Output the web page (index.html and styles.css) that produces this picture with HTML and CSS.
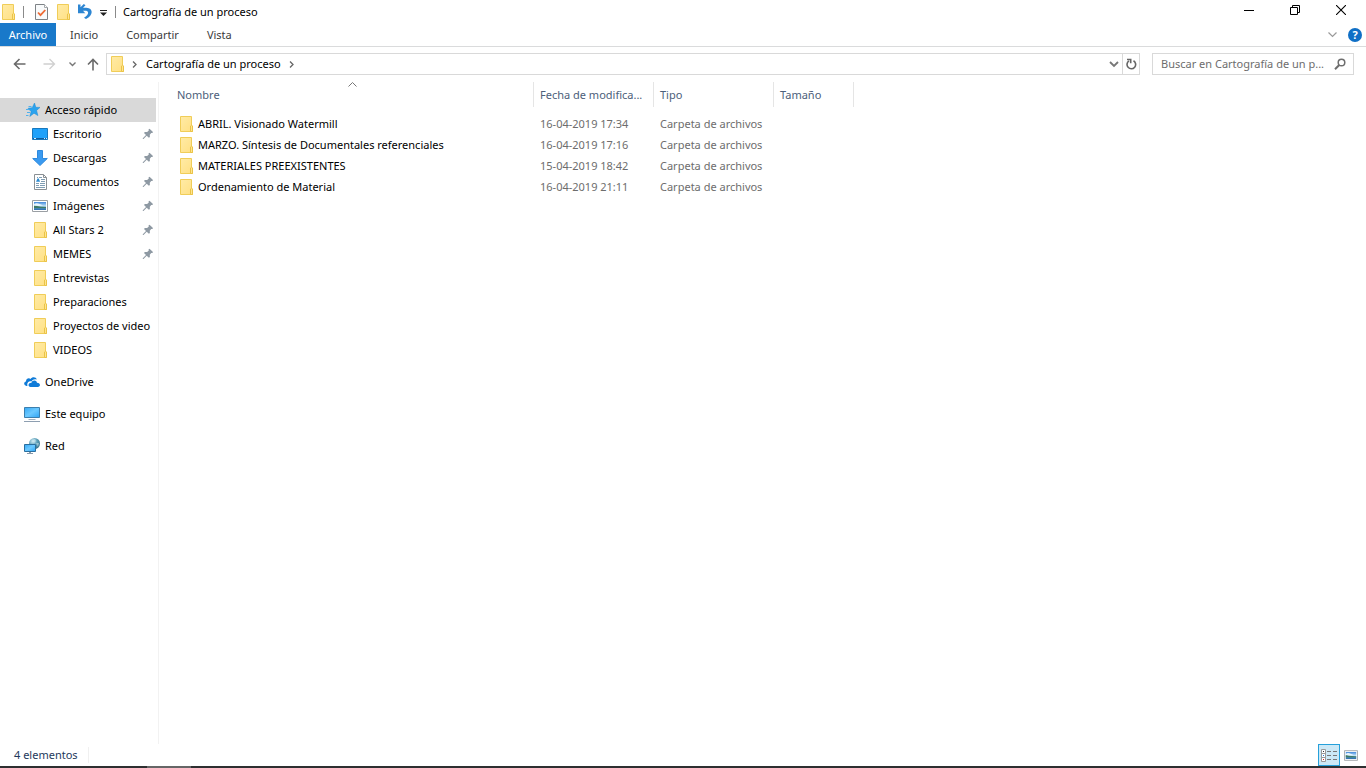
FILE: index.html
```html
<!DOCTYPE html>
<html lang="es">
<head>
<meta charset="utf-8">
<title>Cartografía de un proceso</title>
<link rel="stylesheet" href="styles.css">
</head>
<body>
<svg class="defs" aria-hidden="true">
  <defs>
    <linearGradient id="fold" x1="0" y1="0" x2="1" y2="1"><stop offset="0" stop-color="#ffeba6"/><stop offset="1" stop-color="#ffe083"/></linearGradient>
    <linearGradient id="screen" x1="0" y1="0" x2="1" y2="1"><stop offset="0" stop-color="#35a8f5"/><stop offset=".5" stop-color="#6cc9ff"/><stop offset="1" stop-color="#2ea4f4"/></linearGradient>
    <linearGradient id="sky" x1="0" y1="0" x2="0" y2="1"><stop offset="0" stop-color="#4088dc"/><stop offset=".5" stop-color="#c3e2f7"/><stop offset=".7" stop-color="#4f93b0"/><stop offset="1" stop-color="#2e6cb4"/></linearGradient>
    <radialGradient id="globe" cx=".35" cy=".3" r=".8"><stop offset="0" stop-color="#cfe9f2"/><stop offset=".5" stop-color="#5c9fb8"/><stop offset="1" stop-color="#2f6a85"/></radialGradient>
  </defs>
  <symbol id="folder" viewBox="0 0 13 16"><path d="M.5.5h11v9l1 .5v5.500H.5z" fill="url(#fold)" stroke="#f0cd58"/><path d="M10.500 15.500V10l1-.8 1 .8v5.500z" fill="#ffe58f" stroke="#eac348"/></symbol>
  <symbol id="pin" viewBox="0 0 12 12"><path d="M6.500 1.500l1-.8L11 4l-.6 1H9.200L7.800 6.800l.1 2.100-1 .9L4.700 7.800 1.500 11H.8v-.7L4 7 2 4.900l.9-.9 2.200.1 1.700-1.600z" fill="#8e99a3"/></symbol>
  <symbol id="picture" viewBox="0 0 16 12"><path d="M.5.500h15v11H.5z" fill="#fff" stroke="#9a9fa4"/><path d="M2 2h12v8H2z" fill="url(#sky)"/><path d="M2 5.500l3 .5 4 .7 5 .3v1H2z" fill="#3f7a66"/><path d="M2 4.500q2-2 4-1l3 1 2 1q-4 .8-9 0" fill="#eaf6fd"/></symbol>
</svg>

<div class="window">
  <header class="titlebar">
    <svg class="folder" aria-hidden="true"><use href="#folder"/></svg>
    <span class="rule rule-first"></span>
    <button class="quick quick-props" aria-label="Propiedades"><svg width="13" height="16" viewBox="0 0 13 16"><path d="M.5.500h9l3 3v12H.5z" fill="#f8fafb" stroke="#7d8286"/><path d="M9.500.500v3h3" fill="#fff" stroke="#a5a9ac"/><path d="M3 8.500l2.500 2.700L10.300 6" fill="none" stroke="#ee6b35" stroke-width="1.800"/></svg></button>
    <button class="quick quick-new" aria-label="Nueva carpeta"><svg class="folder"><use href="#folder"/></svg></button>
    <button class="quick quick-undo" aria-label="Deshacer"><svg width="14" height="15" viewBox="0 0 14 15"><path d="M0 .5h2.500v2.700L5.800 0l1.700 1.200L5 3.700h3.500C15.500 4.200 15.500 11 8 15l-2-1.200c4.500-3 5.500-6.500 2-7H5L7.300 9.300H0z" fill="#2d86d2"/></svg></button>
    <button class="quick quick-more" aria-label="Personalizar"><svg width="7" height="6" viewBox="0 0 7 6"><path d="M0 0h7v1H0zM0 2.500h7L3.500 6z" fill="#222"/></svg></button>
    <span class="rule"></span>
    <h1 class="title">Cartografía de un proceso</h1>
    <div class="caption">
      <button aria-label="Minimizar"><svg width="10" height="10" viewBox="0 0 10 10"><path d="M0 5.500h10" stroke="#000"/></svg></button>
      <button aria-label="Restaurar"><svg width="10" height="10" viewBox="0 0 10 10"><path d="M.5 2.500h7v7h-7zM2.500 2.500v-2h7v7h-2" fill="none" stroke="#000"/></svg></button>
      <button aria-label="Cerrar"><svg width="10" height="10" viewBox="0 0 10 10"><path d="M0 0l10 10M10 0L0 10" stroke="#000" stroke-width="1.100"/></svg></button>
    </div>
  </header>

  <nav class="ribbon" aria-label="Cinta">
    <button class="tab tab-file">Archivo</button>
    <button class="tab">Inicio</button>
    <button class="tab">Compartir</button>
    <button class="tab">Vista</button>
    <span class="fill"></span>
    <button class="expand" aria-label="Expandir la cinta"><svg width="9" height="6" viewBox="0 0 9 6"><path d="M.5.500l4 4 4-4" fill="none" stroke="#9a9a9a" stroke-width="1.200"/></svg></button>
    <button class="help" aria-label="Ayuda">?</button>
  </nav>

  <div class="navbar">
    <button class="nav-btn nav-back" aria-label="Atrás"><svg width="13" height="12" viewBox="0 0 13 12"><path d="M12.500 6H1.500M6.500 1l-5 5 5 5" fill="none" stroke="#6a6a6a" stroke-width="1.600"/></svg></button>
    <button class="nav-btn nav-forward" aria-label="Adelante"><svg width="13" height="12" viewBox="0 0 13 12"><path d="M.5 6h11M6.500 1l5 5-5 5" fill="none" stroke="#d0d0d0" stroke-width="1.300"/></svg></button>
    <button class="nav-btn nav-recent" aria-label="Recientes"><svg width="7" height="5" viewBox="0 0 7 5"><path d="M.5.500l3 3 3-3" fill="none" stroke="#777" stroke-width="1.400"/></svg></button>
    <button class="nav-btn nav-up" aria-label="Subir"><svg width="12" height="13" viewBox="0 0 12 13"><path d="M6 12.500V1.500M1 6.500l5-5 5 5" fill="none" stroke="#6a6a6a" stroke-width="1.600"/></svg></button>
    <div class="address">
      <svg class="folder" aria-hidden="true"><use href="#folder"/></svg>
      <svg class="crumb" viewBox="0 0 5 7" aria-hidden="true"><path d="M1 .5l3 3-3 3" fill="none" stroke="#666" stroke-width="1.300"/></svg>
      <a href="#">Cartografía de un proceso</a>
      <svg class="crumb" viewBox="0 0 5 7" aria-hidden="true"><path d="M1 .5l3 3-3 3" fill="none" stroke="#666" stroke-width="1.300"/></svg>
      <span class="fill"></span>
      <button class="history" aria-label="Ubicaciones anteriores"><svg width="10" height="7" viewBox="0 0 10 7"><path d="M1 1l4 4 4-4" fill="none" stroke="#777" stroke-width="1.800"/></svg></button>
      <button class="refresh" aria-label="Actualizar"><svg width="11" height="12" viewBox="0 0 11 12"><path d="M7.500 2.700a4.300 4.300 0 1 1-4.500.1" fill="none" stroke="#666" stroke-width="1.600"/><path d="M1 1.500h3.700v3.800" fill="none" stroke="#666" stroke-width="1.600"/></svg></button>
    </div>
    <div class="search">
      <input type="text" aria-label="Buscar" placeholder="Buscar en Cartografía de un p...">
      <svg width="12" height="12" viewBox="0 0 12 12" aria-hidden="true"><circle cx="7.500" cy="4.500" r="3.300" fill="none" stroke="#6e6e6e" stroke-width="1.500"/><path d="M5.200 7L1 11.200" stroke="#6e6e6e" stroke-width="2"/></svg>
    </div>
  </div>

  <div class="body">
    <nav class="side" aria-label="Panel de navegación">
      <a href="#" class="item root selected"><span class="icon icon-star"><svg width="14" height="14" viewBox="0 0 14 14"><path d="M8.500 0l1.300 4.300 4.200.1-3.400 3 1.300 5.200-3.900-2.400-4.200 3.300 1.300-4.900L2 5.300l4.200-.6z" fill="#2ba3ee" stroke="#1c8ad4" stroke-width=".5"/><path d="M2.500 3.500h3M0 6.500h3M1 9.500h3M0 12.500h2.500" stroke="#4fb0ec"/></svg></span>Acceso rápido</a>
      <a href="#" class="item"><span class="icon"><svg width="16" height="12" viewBox="0 0 16 12"><path d="M.5.500h15v11H.5z" fill="#1ea1fa" stroke="#1878bd"/><path d="M1 10.500h14" stroke="#0d5b9c"/><path d="M2 10.500h2M12 10.500h1M14 10.500h1" stroke="#d7efff"/></svg></span><span class="label">Escritorio</span><svg class="pin"><use href="#pin"/></svg></a>
      <a href="#" class="item"><span class="icon"><svg width="16" height="16" viewBox="0 0 16 16"><path d="M5.500.500h5v8h4.800L8 15.500.700 8.500h4.800z" fill="#3a9af0" stroke="#2e8ade"/></svg></span><span class="label">Descargas</span><svg class="pin"><use href="#pin"/></svg></a>
      <a href="#" class="item"><span class="icon"><svg width="13" height="16" viewBox="0 0 13 16"><path d="M.5.500h9l3 3v12H.5z" fill="#fff" stroke="#8a9094"/><path d="M9.500.500v3h3" fill="none" stroke="#8a9094"/><path d="M3 3.500h1M5 3.500h3M7 5.500h4M7 7.500h4M2 9.500h3M6 9.500h5M2 11.500h3M6 11.500h5M2 13.500h9" stroke="#7f9db3"/><path d="M2 7.800L3.500 4.500h1.300L6 7.800z" fill="#2b8ad0"/></svg></span><span class="label">Documentos</span><svg class="pin"><use href="#pin"/></svg></a>
      <a href="#" class="item"><span class="icon"><svg width="16" height="12"><use href="#picture"/></svg></span><span class="label">Imágenes</span><svg class="pin"><use href="#pin"/></svg></a>
      <a href="#" class="item"><span class="icon"><svg class="folder"><use href="#folder"/></svg></span><span class="label">All Stars 2</span><svg class="pin"><use href="#pin"/></svg></a>
      <a href="#" class="item"><span class="icon"><svg class="folder"><use href="#folder"/></svg></span><span class="label">MEMES</span><svg class="pin"><use href="#pin"/></svg></a>
      <a href="#" class="item"><span class="icon"><svg class="folder"><use href="#folder"/></svg></span>Entrevistas</a>
      <a href="#" class="item"><span class="icon"><svg class="folder"><use href="#folder"/></svg></span>Preparaciones</a>
      <a href="#" class="item"><span class="icon"><svg class="folder"><use href="#folder"/></svg></span>Proyectos de video</a>
      <a href="#" class="item"><span class="icon"><svg class="folder"><use href="#folder"/></svg></span>VIDEOS</a>
      <a href="#" class="item root apart"><span class="icon"><svg width="16" height="10" viewBox="0 0 16 10"><path d="M3.500 9H2.500C-.5 8.500-.5 5 2 4.500 2 1.500 5 .5 6.500 2 8-.5 12-.5 12.800 2.500 10 1.500 8 3 7.500 4.500 4.500 3.500 2.500 6.500 3.500 9z" fill="#0f7bd8"/><path d="M6.500 10C3.500 9.800 4 5.500 7.500 5.800 8 2.800 12.500 2.500 13 5.700c3.800 0 3.800 4.200.8 4.300z" fill="#0f7bd8"/></svg></span>OneDrive</a>
      <a href="#" class="item root apart"><span class="icon"><svg width="16" height="15" viewBox="0 0 16 15"><path d="M.5.500h15v10H.5z" fill="url(#screen)" stroke="#3b7fae"/><path d="M4.500 12.500h7" stroke="#a2b0bd"/><path d="M0 14.500h16" stroke="#8e9fb1"/></svg></span>Este equipo</a>
      <a href="#" class="item root apart"><span class="icon"><svg width="16" height="16" viewBox="0 0 16 16"><circle cx="10.500" cy="5.500" r="5.500" fill="url(#globe)"/><path d="M8 2l3-1 1 2-2 2zM12 5l3 0-1 4z" fill="#d6eef5" opacity=".5"/><path d="M.5 6.500h11v7H.5z" fill="url(#screen)" stroke="#2b6e9e"/><path d="M5 14.500h2M3 15.500h6" stroke="#8799aa"/></svg></span>Red</a>
    </nav>

    <main class="content">
      <table class="files">
        <colgroup><col class="c-name"><col class="c-date"><col class="c-type"><col class="c-size"></colgroup>
        <thead><tr>
          <th scope="col" class="sorted">Nombre<svg class="sort" viewBox="0 0 9 5" aria-hidden="true"><path d="M.5 4.500l4-4 4 4" fill="none" stroke="#777"/></svg></th>
          <th scope="col">Fecha de modifica...</th><th scope="col">Tipo</th><th scope="col">Tamaño</th>
        </tr></thead>
        <tbody>
          <tr><td><span class="name"><svg class="folder"><use href="#folder"/></svg>ABRIL. Visionado Watermill</span></td><td>16-04-2019 17:34</td><td>Carpeta de archivos</td><td></td></tr>
          <tr><td><span class="name"><svg class="folder"><use href="#folder"/></svg>MARZO. Síntesis de Documentales referenciales</span></td><td>16-04-2019 17:16</td><td>Carpeta de archivos</td><td></td></tr>
          <tr><td><span class="name"><svg class="folder"><use href="#folder"/></svg>MATERIALES PREEXISTENTES</span></td><td>15-04-2019 18:42</td><td>Carpeta de archivos</td><td></td></tr>
          <tr><td><span class="name"><svg class="folder"><use href="#folder"/></svg>Ordenamiento de Material</span></td><td>16-04-2019 21:11</td><td>Carpeta de archivos</td><td></td></tr>
        </tbody>
      </table>
    </main>
  </div>

  <footer class="status">
    <span class="count">4 elementos</span>
    <span class="fill"></span>
    <button class="view view-on" aria-label="Detalles"><svg width="16" height="13" viewBox="0 0 16 13"><path d="M.5.500h4v4h-4zM.5 4.500h4v4h-4zM.5 8.500h4v4h-4z" fill="#fff" stroke="#999"/><path d="M6 2.500h4M12 2.500h4M6 6.500h4M12 6.500h4M6 10.500h4M12 10.500h4" stroke="#777"/><path d="M2 2h1v1H2z" fill="#333"/><path d="M2 6h1v1H2z" fill="#1e78d8"/><path d="M2 10h1v1H2z" fill="#d22"/></svg></button>
    <button class="view" aria-label="Iconos grandes"><svg width="14" height="11"><use href="#picture"/></svg></button>
  </footer>
  <div class="taskbar"><span></span></div>
</div>
</body>
</html>
```
FILE: styles.css
```css
* { box-sizing: border-box; }
body {
  margin: 0;
  background: #fff;
  color: #000;
  font: 11px/16px "Noto Sans", "Open Sans", sans-serif;
}
button {
  display: flex;
  align-items: center;
  justify-content: center;
  flex: none;
  margin: 0;
  padding: 0;
  border: 0;
  background: none;
  color: inherit;
  font: inherit;
}
a { color: inherit; text-decoration: none; }
svg { display: block; flex: none; }
.defs { position: absolute; width: 0; height: 0; }
.folder { width: 13px; height: 16px; }
.fill { flex: 1; }
.window { display: flex; flex-direction: column; height: 100vh; }

.titlebar { display: flex; align-items: center; height: 23px; padding-left: 2px; }
.rule { width: 1px; height: 12px; background: #8a8a8a; }
.rule-first { margin-left: 8px; }
.quick-props { margin-left: 11px; }
.quick-new { margin-left: 9px; }
.quick-undo { margin-left: 8px; }
.quick-more { margin: 2px 8px 0; }
.title { flex: 1; margin: 0 0 0 7px; font-size: 11px; font-weight: 400; }
.caption { display: flex; align-self: flex-start; padding-right: 2px; }
.caption button { width: 46px; height: 20px; }

.ribbon { display: flex; align-items: center; height: 24px; padding-right: 4px; border-bottom: 1px solid #dadbdc; }
.tab { height: 23px; padding: 0 14px; color: #3b3b3b; }
.tab-file { width: 56px; padding: 0; background: #1979ca; color: #fff; }
.expand { margin-right: 11px; }
.help { width: 14px; height: 14px; border-radius: 50%; background: #0f6fc6; color: #fff; font-weight: 700; }

.navbar { display: flex; align-items: center; padding: 6px 12px 0 0; }
.nav-back { margin-left: 13px; }
.nav-forward { margin-left: 17px; }
.nav-recent { margin-left: 13px; }
.nav-up { margin-left: 11px; }
.address { display: flex; flex: 1; align-items: center; height: 22px; margin-left: 7px; padding-left: 4px; border: 1px solid #d9d9d9; }
.crumb { width: 5px; height: 7px; margin: 0 9px 0 8px; }
.history { width: 16px; height: 20px; }
.refresh { width: 17px; height: 20px; border-left: 1px solid #d9d9d9; }
.search { display: flex; align-items: center; width: 202px; height: 22px; margin-left: 12px; padding: 0 7px 0 8px; border: 1px solid #d9d9d9; }
.search input { flex: 1; min-width: 0; padding: 0; border: 0; outline: 0; background: none; font: inherit; }
.search input::placeholder { color: #6d6d6d; opacity: 1; }

.body { display: flex; flex: 1; min-height: 0; padding-top: 7px; }
.side { flex: none; width: 159px; padding: 16px 2px 0 0; border-right: 1px solid #f2f2f2; }
.item { display: flex; align-items: center; height: 24px; padding: 0 2px 0 32px; white-space: nowrap; }
.root { padding-left: 24px; }
.selected { background: #d9d9d9; }
.apart { margin-top: 8px; }
.icon { display: flex; justify-content: center; flex: none; width: 16px; margin-right: 5px; }
.icon-star { justify-content: flex-end; }
.label { flex: 1; }
.pin { width: 12px; height: 12px; }

.content { flex: 1; min-width: 0; padding-left: 12px; }
.files { width: 683px; border-collapse: separate; border-spacing: 0; table-layout: fixed; }
.c-name { width: 363px; }
.c-date, .c-type { width: 120px; }
.c-size { width: 80px; }
.files th { height: 25px; padding: 0 0 0 6px; border-right: 1px solid #e5e5e5; color: #4c607a; font-weight: 400; text-align: left; white-space: nowrap; }
.sorted { position: relative; }
.sort { position: absolute; top: 0; left: 50%; width: 9px; height: 5px; margin-left: -4px; }
.files tbody::before { content: ""; display: table-row; height: 6px; }
.files td { height: 21px; padding: 0 0 0 6px; color: #6d6d6d; white-space: nowrap; }
.name { display: flex; align-items: center; gap: 5px; padding-left: 3px; color: #000; }

.status { display: flex; align-items: center; height: 22px; padding: 0 4px 0 14px; color: #1e395b; }
.count { padding-right: 10px; border-right: 1px solid #f0f0f0; }
.view { width: 22px; height: 22px; }
.view-on { border: 1px solid #26a0da; background: #cce8f6; }
.taskbar { display: flex; height: 2px; padding-left: 147px; background: #2e2f30; }
.taskbar span { width: 44px; background: #666; }
```
